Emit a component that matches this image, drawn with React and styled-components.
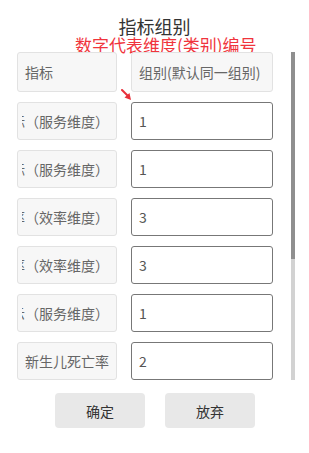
import React from "react";
import styled, { createGlobalStyle } from "styled-components";

const GlobalStyle = createGlobalStyle`
  body {
    margin: 0;
    background: #fff;
    font-family: "Noto Sans CJK SC", "Noto Sans", sans-serif;
  }
`;

const Page = styled.div`
  position: relative;
  width: 309px;
  height: 453px;
  background: #fff;
  overflow: hidden;
`;

const Title = styled.h2`
  margin: 0;
  padding-top: 14px;
  height: 24px;
  line-height: 24px;
  font-size: 18px;
  font-weight: 400;
  color: #333;
  text-align: center;
`;

const Note = styled.div`
  position: absolute;
  top: 35px;
  left: 75px;
  font-size: 17px;
  line-height: 20px;
  color: #f0343c;
  white-space: nowrap;
`;

const Arrow = styled.svg`
  position: absolute;
  left: 121px;
  top: 89px;
`;

const ListWrap = styled.div`
  position: relative;
  margin: 14px 0 0 17px;
  width: 278px;
  height: 328px;
`;

const List = styled.div`
  width: 274px;
  height: 100%;
  overflow-y: auto;
  scrollbar-width: none;
  display: flex;
  flex-direction: column;
  gap: 10px;

  &::-webkit-scrollbar {
    display: none;
  }
`;

const Track = styled.div`
  position: absolute;
  top: 0;
  right: 0;
  bottom: 0;
  width: 4px;
  background: #d2d2d2;
`;

const Thumb = styled.div`
  width: 100%;
  background: #8f8f8f;
`;

const Row = styled.div`
  display: grid;
  grid-template-columns: 100px 142px;
  column-gap: 14px;
  height: ${(props) => (props.head ? "40px" : "38px")};
  flex-shrink: 0;
`;

const Label = styled.div`
  box-sizing: border-box;
  display: flex;
  align-items: center;
  padding: ${(props) => (props.head ? "0 7px" : "0 7px 0 4px")};
  background: #f7f7f7;
  border: 1px solid #e2e2e2;
  border-radius: 3px;
  font-size: 14px;
  color: #666;
  white-space: nowrap;
  overflow: hidden;
`;

const LabelText = styled.span`
  flex: 1;
  display: flex;
  justify-content: flex-end;
  overflow: hidden;
`;

const Input = styled.input`
  box-sizing: border-box;
  width: 100%;
  height: 100%;
  margin: 0;
  padding: 0 7px;
  border: 1px solid #777;
  border-radius: 3px;
  font-family: inherit;
  font-size: 14px;
  color: #555;
  background: #fff;
  outline: none;
`;

const Footer = styled.div`
  display: flex;
  justify-content: center;
  gap: 20px;
  margin-top: 13px;
  padding-left: 1px;
`;

const Button = styled.button`
  width: 90px;
  height: 35px;
  border: none;
  border-radius: 4px;
  background: #e8e8e8;
  font-family: inherit;
  font-size: 14px;
  color: #333;
  cursor: pointer;
`;

const rows = [
  { name: "患者满意指标（服务维度）", group: "1" },
  { name: "预约诊疗指标（服务维度）", group: "1" },
  { name: "床位使用率（效率维度）", group: "3" },
  { name: "手术周转率（效率维度）", group: "3" },
  { name: "门诊预约提示（服务维度）", group: "1" },
  { name: "新生儿死亡率", group: "2" },
  { name: "孕产妇死亡率", group: "2" },
  { name: "医疗收入（经济维度）", group: "4" },
  { name: "药占比（经济维度）", group: "4" },
  { name: "出院人次（效率维度）", group: "3" },
];

export default function App() {
  return (
    <Page>
      <GlobalStyle />
      <Title>指标组别</Title>
      <Note>数字代表维度(类别)编号</Note>
      <Arrow width="11" height="12" viewBox="0 0 11 12">
        <path d="M1 1 L7 7" stroke="#e8303a" strokeWidth="2" strokeLinecap="round" />
        <path d="M10 11 L3.5 8.5 L8.5 4 Z" fill="#e8303a" />
      </Arrow>
      <ListWrap>
        <List>
          <Row head>
            <Label head>指标</Label>
            <Label head>组别(默认同一组别)</Label>
          </Row>
          {rows.map((r, i) => (
            <Row key={i}>
              <Label>
                <LabelText>{r.name}</LabelText>
              </Label>
              <Input defaultValue={r.group} />
            </Row>
          ))}
        </List>
        <Track>
          <Thumb style={{ height: `${Math.round((328 * 328) / 520)}px` }} />
        </Track>
      </ListWrap>
      <Footer>
        <Button>确定</Button>
        <Button>放弃</Button>
      </Footer>
    </Page>
  );
}
